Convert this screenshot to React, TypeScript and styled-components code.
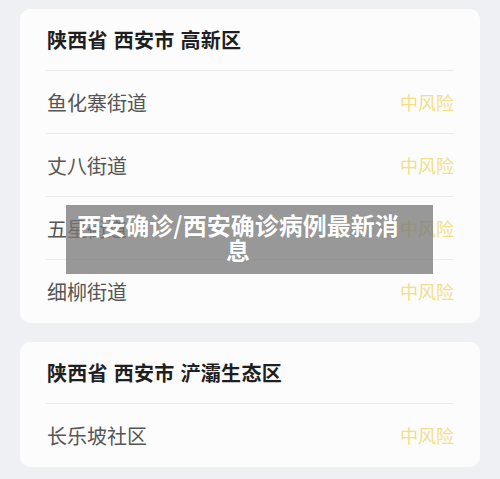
import React from "react";
import styled, { createGlobalStyle } from "styled-components";

const Global = createGlobalStyle`
  html, body {
    margin: 0;
    padding: 0;
    background: #eef0f4;
    font-family: "Noto Sans CJK SC", "Noto Sans", sans-serif;
  }
`;

const Page = styled.div`
  position: relative;
  width: 500px;
  height: 479px;
  overflow: hidden;
  box-sizing: border-box;
  padding: 9px 20px 0 20px;
  display: flex;
  flex-direction: column;
  gap: 19px;
`;

const Card = styled.div`
  background: #fcfcfd;
  border-radius: 10px;
  padding: 0 26px 1px 26px;
  display: flex;
  flex-direction: column;
`;

const Header = styled.div`
  height: 61px;
  display: flex;
  align-items: center;
  padding-left: 1px;
  font-size: 20px;
  font-weight: 700;
  color: #1f1f1f;
  letter-spacing: 0.3px;
  word-spacing: 1px;
`;

const Row = styled.div`
  height: 62px;
  border-top: 1px solid #ececee;
  display: flex;
  align-items: center;
  justify-content: space-between;
  padding-left: 1px;
`;

const Name = styled.span`
  font-size: 20px;
  color: #555555;
`;

const Risk = styled.span`
  font-size: 18px;
  color: #f2df86;
`;

const Overlay = styled.div`
  position: absolute;
  left: 66px;
  top: 205px;
  width: 367px;
  height: 69px;
  box-sizing: border-box;
  background: rgba(120, 120, 120, 0.76);
  padding: 7px 25px 0 2px;
  color: #ffffff;
  font-size: 24px;
  font-weight: 700;
  line-height: 25px;
  text-align: center;
  text-shadow: 0 0 1px rgba(0, 0, 0, 0.2);
`;

const groups = [
  {
    title: "陕西省 西安市 高新区",
    rows: ["鱼化寨街道", "丈八街道", "五星街道", "细柳街道"],
  },
  {
    title: "陕西省 西安市 浐灞生态区",
    rows: ["长乐坡社区"],
  },
];

export default function App() {
  return (
    <>
      <Global />
      <Page>
        {groups.map((g) => (
          <Card key={g.title}>
            <Header>{g.title}</Header>
            {g.rows.map((r) => (
              <Row key={r}>
                <Name>{r}</Name>
                <Risk>中风险</Risk>
              </Row>
            ))}
          </Card>
        ))}
        <Overlay>西安确诊/西安确诊病例最新消息</Overlay>
      </Page>
    </>
  );
}
